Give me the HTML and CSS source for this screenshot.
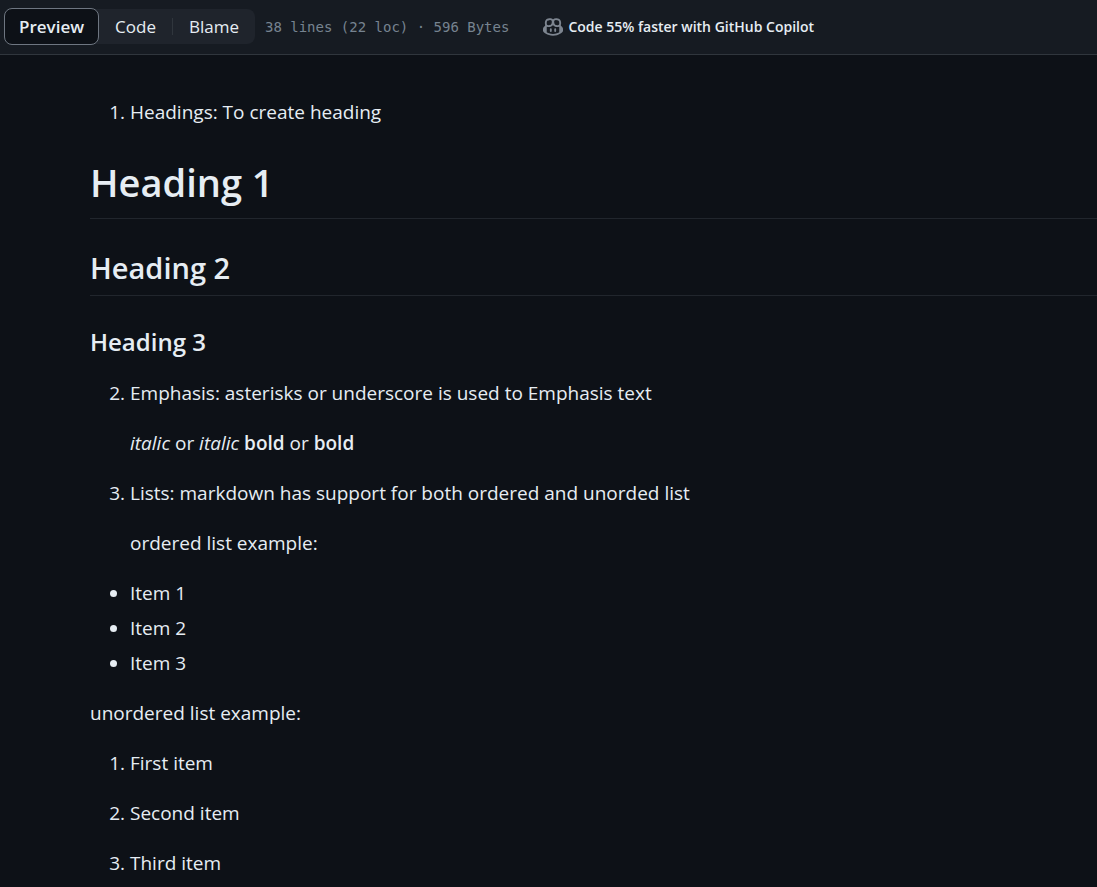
FILE: index.html
```html
<!DOCTYPE html>
<html lang="en">
<head>
<meta charset="utf-8">
<meta name="viewport" content="width=device-width, initial-scale=1">
<title>Markdown preview</title>
<link rel="stylesheet" href="styles.css">
</head>
<body>
<header class="toolbar">
  <div class="segments">
    <button type="button" class="segment segment-active" aria-pressed="true">Preview</button>
    <button type="button" class="segment">Code</button>
    <span class="divider"></span>
    <button type="button" class="segment">Blame</button>
  </div>
  <span class="file-info">38 lines (22 loc) · 596 Bytes</span>
  <a class="copilot" href="#copilot">
    <svg class="copilot-icon" viewBox="0 0 16 16" aria-hidden="true">
      <path d="M7.998 15.035c-4.562 0-7.873-2.914-7.998-3.749V9.338c.085-.628.677-1.686 1.588-2.065.013-.07.024-.143.036-.218.029-.183.06-.384.126-.612-.201-.508-.254-1.084-.254-1.656 0-.87.128-1.769.693-2.484.579-.733 1.494-1.124 2.724-1.261 1.206-.134 2.262.034 2.944.765.05.053.096.108.139.165.044-.057.094-.112.143-.165.682-.731 1.738-.899 2.944-.765 1.23.137 2.145.528 2.724 1.261.566.715.693 1.614.693 2.484 0 .572-.053 1.148-.254 1.656.066.228.098.429.126.612.012.076.024.148.037.218.924.385 1.522 1.471 1.591 2.095v1.872c0 .766-3.351 3.795-8.002 3.795Zm0-1.485c2.28 0 4.584-1.11 5.002-1.433V7.862l-.023-.116c-.49.21-1.075.291-1.727.291-1.146 0-2.059-.327-2.71-.991A3.222 3.222 0 0 1 8 6.303a3.24 3.24 0 0 1-.544.743c-.65.664-1.563.991-2.71.991-.652 0-1.236-.081-1.727-.291l-.023.116v4.255c.419.323 2.722 1.433 5.002 1.433ZM6.762 2.83c-.193-.206-.637-.413-1.682-.297-1.019.113-1.479.404-1.713.7-.247.312-.369.789-.369 1.554 0 .793.129 1.171.308 1.371.162.181.519.379 1.442.379.853 0 1.339-.235 1.638-.54.315-.322.527-.827.617-1.553.117-.935-.037-1.395-.241-1.614Zm4.155-.297c-1.044-.116-1.488.091-1.681.297-.204.219-.359.679-.242 1.614.091.726.303 1.231.618 1.553.299.305.784.54 1.638.54.922 0 1.28-.198 1.442-.379.179-.2.308-.578.308-1.371 0-.765-.123-1.242-.37-1.554-.233-.296-.693-.587-1.713-.7Z"/>
      <path d="M6.25 9.037a.75.75 0 0 1 .75.75v1.501a.75.75 0 0 1-1.5 0V9.787a.75.75 0 0 1 .75-.75Zm4.25.75v1.501a.75.75 0 0 1-1.5 0V9.787a.75.75 0 0 1 1.5 0Z"/>
    </svg>
    <span>Code 55% faster with GitHub Copilot</span>
  </a>
</header>
<main class="markdown">
  <ol>
    <li>Headings: To create heading</li>
  </ol>
  <h1>Heading 1</h1>
  <h2>Heading 2</h2>
  <h3>Heading 3</h3>
  <ol class="loose" start="2">
    <li>
      <p>Emphasis: asterisks or underscore is used to Emphasis text</p>
      <p><em>italic</em> or <em>italic</em> <strong>bold</strong> or <strong>bold</strong></p>
    </li>
    <li>
      <p>Lists: markdown has support for both ordered and unorded list</p>
      <p>ordered list example:</p>
    </li>
  </ol>
  <ul>
    <li>Item 1</li>
    <li>Item 2</li>
    <li>Item 3</li>
  </ul>
  <p>unordered list example:</p>
  <ol class="loose">
    <li><p>First item</p></li>
    <li><p>Second item</p></li>
    <li><p>Third item</p></li>
  </ol>
</main>
</body>
</html>
```

FILE: styles.css
```css
* {
  box-sizing: border-box;
}

body {
  margin: 0;
  background: #0d1117;
  color: #e6edf3;
  font-family: "Open Sans", "Noto Sans", sans-serif;
  font-size: 19px;
  line-height: 30px;
}

.toolbar {
  display: flex;
  align-items: center;
  height: 55px;
  padding: 0 4px 1px;
  background: #161b22;
  border-bottom: 1px solid #30363d;
}

.segments {
  display: flex;
  align-items: center;
  height: 35px;
  background: #1f242c;
  border-radius: 8px;
}

.segment {
  height: 35px;
  padding: 0 16px;
  border: 0;
  background: none;
  color: inherit;
  font: inherit;
  font-size: 17px;
}

.segment-active {
  height: 37px;
  padding: 0 14px;
  background: #0d1117;
  border: 1px solid #6e7681;
  border-radius: 8px;
  font-weight: 600;
}

.divider {
  width: 1px;
  height: 17px;
  background: #30363d;
}

.file-info {
  margin-left: 10px;
  color: #768390;
  font-family: "DejaVu Sans Mono", monospace;
  font-size: 14px;
  white-space: nowrap;
}

.copilot {
  display: flex;
  align-items: center;
  gap: 5px;
  margin-left: 34px;
  color: inherit;
  font-size: 14px;
  font-weight: 600;
  text-decoration: none;
  white-space: nowrap;
}

.copilot-icon {
  width: 20px;
  height: 20px;
  fill: #7d8590;
}

.markdown {
  padding: 42px 0 9px 90px;
}

.markdown p,
.markdown ol,
.markdown ul {
  margin: 0 0 20px;
}

.markdown ol,
.markdown ul {
  padding-left: 40px;
}

.markdown h1,
.markdown h2,
.markdown h3 {
  margin: 30px 0 20px;
  font-weight: 600;
}

.markdown h1 {
  padding-bottom: 11px;
  border-bottom: 1px solid #21262d;
  font-size: 38px;
  line-height: 50px;
}

.markdown h2 {
  padding-bottom: 8px;
  border-bottom: 1px solid #21262d;
  font-size: 29px;
  line-height: 38px;
}

.markdown h3 {
  font-size: 24px;
  line-height: 32px;
}

.markdown li + li {
  margin-top: 5px;
}

.markdown .loose > li + li {
  margin-top: 20px;
}

.markdown li > p:last-child {
  margin-bottom: 0;
}

.markdown strong {
  font-weight: 600;
}
```
